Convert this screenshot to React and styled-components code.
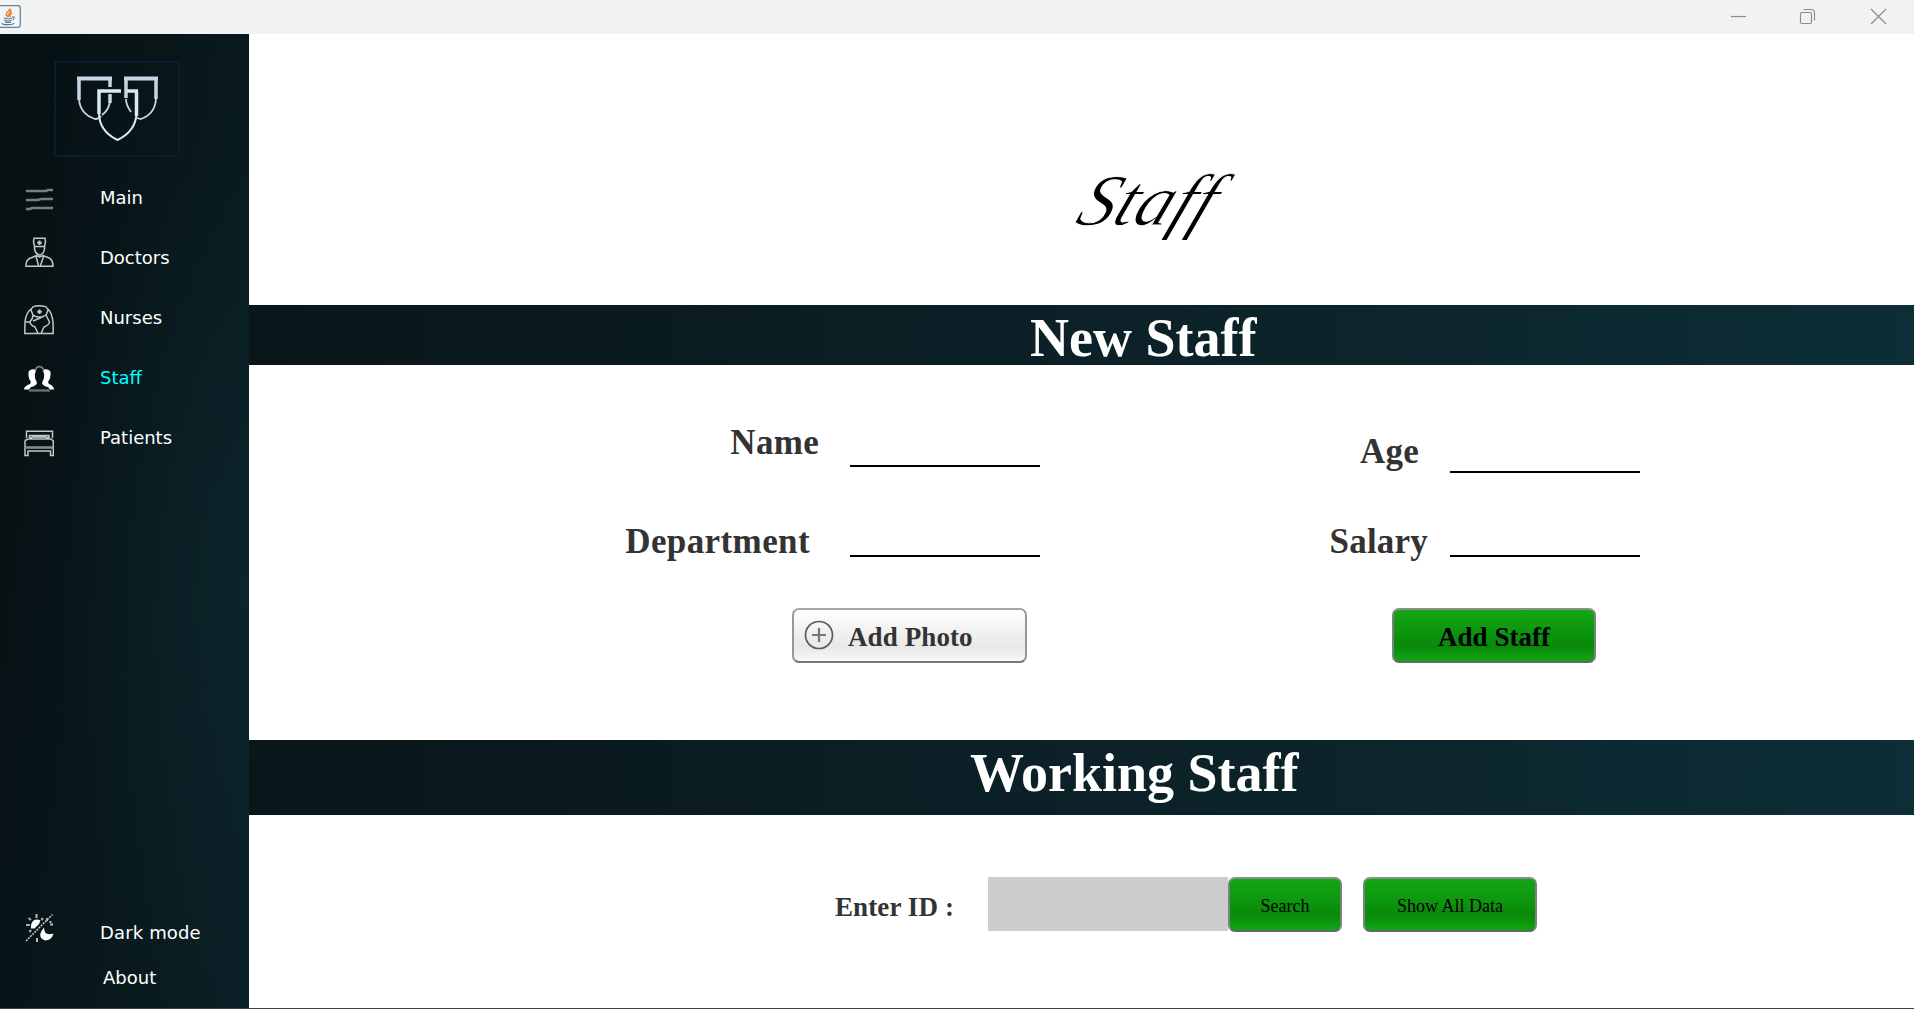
import React from "react";
import styled, { createGlobalStyle, css } from "styled-components";

const Global = createGlobalStyle`
  *, *::before, *::after { box-sizing: border-box; }
  html, body { margin: 0; padding: 0; overflow: hidden; background: #fff; }
  button, input { font: inherit; margin: 0; }
`;

const serif = `"Liberation Serif", "Times New Roman", serif`;

const Window = styled.div`
  width: 1914px;
  height: 1009px;
  display: grid;
  grid-template-rows: 34px 974px 1px;
  background: #fff;
`;

const TitleBar = styled.header`
  display: flex;
  justify-content: space-between;
  background: #f2f2f2;
`;

const AppIcon = styled.svg`
  width: 21px;
  height: 24px;
  margin-top: 5px;
`;

const WindowButtons = styled.div`
  display: flex;
  align-items: center;
  gap: 52px;
  padding: 0 27px 1px 0;
`;

const WindowGlyph = styled.svg`
  width: 17px;
  height: 17px;
  fill: none;
  stroke: #8c8c8c;
  stroke-width: 1.2;
  margin-right: ${(p) => p.$after || 0}px;
`;

const Body = styled.div`
  display: grid;
  grid-template-columns: 249px 1fr;
`;

const BottomEdge = styled.div`
  background: #3d4245;
`;

const Sidebar = styled.nav`
  display: flex;
  flex-direction: column;
  background:
    radial-gradient(ellipse 200px 480px at 255px 560px, rgba(13, 40, 46, 0.7), rgba(13, 40, 46, 0) 100%),
    linear-gradient(97deg, #060f11 0%, #08161a 45%, #0a1f25 100%);
`;

const LogoFrame = styled.div`
  width: 126px;
  height: 96px;
  margin: 27px 0 0 54px;
  border: 2px solid #0b1c31;
`;

const Logo = styled.svg`
  display: block;
  width: 122px;
  height: 92px;
`;

const NavList = styled.div`
  display: flex;
  flex-direction: column;
  margin-top: 11px;
`;

const NavItem = styled.a`
  display: flex;
  align-items: center;
  height: 60px;
  padding-left: 24px;
  gap: 46px;
  font: 18px/22px "DejaVu Sans", Verdana, sans-serif;
  letter-spacing: ${(p) => p.$spacing || 0}px;
  color: ${(p) => (p.$active ? "#00ffff" : "#fff")};
`;

const NavIcon = styled.svg`
  width: 30px;
  height: 30px;
  margin-bottom: ${(p) => p.$lift || 0}px;
  margin-top: ${(p) => p.$drop || 0}px;
  fill: none;
  stroke: #c3c8c9;
  stroke-width: 1.5;
`;

const NavFooter = styled.div`
  display: flex;
  flex-direction: column;
  margin-top: auto;
  height: 105px;
`;

const AboutLink = styled.a`
  padding-left: 103px;
  margin-top: 4px;
  font: 18px/22px "DejaVu Sans", Verdana, sans-serif;
  color: #fff;
`;

const Main = styled.main`
  display: grid;
  grid-template-rows: 271px 60px 375px 75px 193px;
  background: #fff;
`;

const Hero = styled.section`
  padding: 129px 0 0 824px;
`;

const ScriptTitle = styled.h1`
  width: max-content;
  margin: 0;
  font: italic 400 73px/76px ${serif};
  color: #000;
  -webkit-text-stroke: 0.9px #fff;
  transform: skewX(-22deg);
  transform-origin: 0 62px;
`;

const Band = styled.h2`
  margin: 0;
  padding-left: ${(p) => p.$indent}px;
  padding-top: ${(p) => p.$drop}px;
  background: linear-gradient(90deg, #09161a 0%, #0a1a1e 20%, #0b2026 42%, #0d242b 68%, #0c2b33 88%, #0d2e37 100%);
  font: bold 54px/60px ${serif};
  color: #fff;
  white-space: nowrap;
`;

const Form = styled.form`
  display: grid;
  grid-template-columns: 791px 600px;
  align-content: start;
`;

const Column = styled.div`
  display: flex;
  flex-direction: column;
`;

const Field = styled.label`
  display: flex;
  justify-content: flex-end;
  height: ${(p) => p.$height}px;
  font: bold 35px/40px ${serif};
  letter-spacing: ${(p) => p.$spacing || 0}px;
  color: #333;
`;

const FieldName = styled.span`
  padding-top: ${(p) => p.$drop}px;
  margin-right: ${(p) => p.$gap}px;
`;

const Line = styled.input`
  width: 190px;
  border: 0;
  border-bottom: 2px solid #000;
  background: transparent;
  outline: none;
  padding: 0;
`;

const buttonSkin = css`
  display: flex;
  align-items: center;
  border: 2px solid #777b80;
  border-radius: 7px;
  font-family: ${serif};
  white-space: nowrap;
`;

const PhotoButton = styled.button`
  ${buttonSkin}
  width: 235px;
  height: 55px;
  margin: 51px 0 0 543px;
  padding: 3px 0 0 10px;
  gap: 14px;
  border-color: #a3a7aa #94989b #75787b;
  background: linear-gradient(#fff 0%, #f0f0f0 45%, #e8e8e8 72%, #f8f8f8 100%);
  font-size: 27px;
  font-weight: bold;
  letter-spacing: 0.1px;
  color: #333;
`;

const GreenButton = styled.button`
  ${buttonSkin}
  justify-content: center;
  width: ${(p) => p.$width}px;
  height: 55px;
  padding: 4px 0 0;
  border-color: #86928b #7a8380 #5f6a66;
  background: linear-gradient(#13a613 0%, #0d970f 42%, #0a880a 70%, #10a612 100%);
  font-size: ${(p) => p.$font}px;
  font-weight: ${(p) => (p.$bold ? "bold" : "normal")};
  color: #000;
  margin: ${(p) => p.$margin || "0"};
`;

const PlusIcon = styled.svg`
  width: 30px;
  height: 30px;
  fill: none;
  stroke: #5b5b5b;
  stroke-width: 1.7;
  margin-bottom: 4px;
`;

const SearchRow = styled.form`
  display: flex;
  align-items: flex-start;
  padding: 62px 0 0 586px;
`;

const SearchLabel = styled.label`
  width: 153px;
  font: bold 27px/60px ${serif};
  letter-spacing: 0.1px;
  color: #333;
  white-space: pre;
`;

const IdInput = styled.input`
  width: 240px;
  height: 54px;
  border: 0;
  background: #ccc;
`;

function MenuIcon() {
  return (
    <NavIcon viewBox="0 0 30 30" $drop={4}>
      <path d="M2 6H22L24 5H29M2 15H14L17 14H29M2 24H6L8 23H29" stroke="#777f80" strokeWidth="2.6" />
    </NavIcon>
  );
}

function DoctorIcon() {
  return (
    <NavIcon viewBox="0 0 30 30" $lift={13}>
      <path d="M10 1.200H21L21.500 5L20.500 9.500H10.500L9.500 5ZM10.500 9.500V12Q11.500 17 15.500 18Q20 17 20.500 12V9.500M2 29.300Q1.500 22 8 20.500L12.500 18.500L15.500 20L19 18.500L24 20.500Q29 22 29 29.300ZM12 19.500L14.500 28.500M19.500 19.500L16.500 28.500" />
      <path d="M15.500 3.500V8M13.200 5.700H17.800" strokeWidth="2" />
    </NavIcon>
  );
}

function NurseIcon() {
  return (
    <NavIcon viewBox="0 0 30 30" $drop={3}>
      <path d="M8 3Q9 .8 15 .8Q22 .8 23 3L24 5L22 10Q19 12 15 12Q11 12 9 10L7 5ZM7 4Q2 8 1 17L.8 28.500H29.200L29 17Q28 8 24 4M9 10Q9 14 6 16.500Q6 20 11 22L14 28.500H17L20 22Q25 20 25.500 17L22 10M9 16L15 13.500L20 11M2 17H6" />
      <path d="M15.500 4.500V9M13.200 6.700H17.800" strokeWidth="2" />
    </NavIcon>
  );
}

function StaffIcon() {
  return (
    <NavIcon viewBox="0 0 30 30" $drop={4}>
      <g fill="#fff" stroke="none">
        <path d="M4.500 7Q6 3.500 12 4.500L12 6Q10 9 11 13L13 18Q12 21 7 22L5 24.500H0Q0 21 6 19L7 17Q4 13 4.500 7Z" />
        <path d="M26.500 7Q25 3.500 19 4.500L19 6Q21 9 20 13L18 18Q19 21 24 22L26 24.500H30Q30 21 25 19L24 17Q27 13 26.500 7Z" />
      </g>
      <path d="M11.500 6Q11.500 2 15.500 1.500Q19.500 2 19.500 6" stroke="#7f8688" />
      <path d="M5 25.500H26" stroke="#6e7577" strokeWidth="2.200" />
    </NavIcon>
  );
}

function BedIcon() {
  return (
    <NavIcon viewBox="0 0 30 30" $drop={7}>
      <path d="M2.500 11V4.300H28.500V11M5.500 11V8.500H25V11M1 13.500L4 12H27L29.300 14V28.500H26.500V24H4V28.500H1V13.500M6 11L9 10H21L25 11" />
      <path d="M1 20.500H29" strokeWidth="2.600" stroke="#858c8f" />
    </NavIcon>
  );
}

function ModeIcon() {
  return (
    <NavIcon viewBox="0 0 30 30" $lift={12}>
      <path d="M2 29L28.500 2.500" strokeDasharray="2 1" />
      <path d="M7 16.500Q6.500 11 9.500 8.500Q13 6.500 16.500 8.500L15 12L10.500 16.500Z" fill="#fff" stroke="none" />
      <path d="M12.500 2V6M2 13H6M4.500 6L7 8M19 6L17.500 8M5.500 20L7 18" stroke="#a5abad" strokeWidth="2.200" />
      <path d="M20 15.500Q20 24.500 29.500 21.500Q27.500 28.500 21 28.500Q12 25 20 15.500Z" fill="#fff" stroke="none" />
      <path d="M26 12.500H29M13 26V30M23 6V9M26.500 9V11" stroke="#b5babb" strokeWidth="2" />
    </NavIcon>
  );
}

export default function App() {
  return (
    <>
      <Global />
      <Window>
        <TitleBar>
          <AppIcon viewBox="0 0 21 24">
            <path d="M-2 .7H18Q20.300 .7 20.300 3V20Q20.300 22.300 18 22.300H-2Z" fill="#f4f5f6" stroke="#66849a" strokeWidth="1.300" />
            <path d="M8 12Q4 9 9 6Q10 5 9 4Q13 6 9 9Q8 10 8 12M10 12Q9 10 12 8" fill="none" stroke="#e8812d" strokeWidth="1.500" />
            <path d="M4 13Q8 14.500 12 13M4 15Q8 17 12 15M5 17Q8 18 11 17M12 12Q16 11 13 15M2 18Q2 20 8 19.600Q14 19.500 14 18" fill="none" stroke="#557b96" strokeWidth="1.200" />
          </AppIcon>
          <WindowButtons>
            <WindowGlyph viewBox="0 0 17 17" $after={0}>
              <path d="M1 8.500H16" />
            </WindowGlyph>
            <WindowGlyph viewBox="0 0 17 17" $after={2}>
              <rect x="1.500" y="4.500" width="11" height="11" rx="1.500" />
              <path d="M4.500 1.500H12Q15.500 1.500 15.500 5V12.500" />
            </WindowGlyph>
            <WindowGlyph viewBox="0 0 17 17">
              <path d="M1 1L16 16M16 1L1 16" />
            </WindowGlyph>
          </WindowButtons>
        </TitleBar>
        <Body>
          <Sidebar>
            <LogoFrame>
              <Logo viewBox="56 63 122 92" fill="none">
                <g stroke="#c9d5e4">
                  <path d="M79 99Q80 114 95 119Q99 119 101 116M110 102Q108 111 102 115" strokeWidth="1.800" />
                  <path d="M131 112Q126 105 126 99M156 99Q155 114 141 119L137 118" strokeWidth="1.800" />
                  <path d="M77 78.500H112M124 78.500H158" strokeWidth="4" />
                  <path d="M79 80V100M110 79V87M110 94V103M126 79V98M156 79V99" strokeWidth="3.500" />
                </g>
                <g stroke="#dde8f8">
                  <path d="M99 114V91H121M127 91H138M136.500 91V116" strokeWidth="3.500" />
                  <path d="M99 113Q99 131 117.500 140Q136 131 136.500 113" strokeWidth="2" />
                </g>
              </Logo>
            </LogoFrame>
            <NavList>
              <NavItem><MenuIcon />Main</NavItem>
              <NavItem><DoctorIcon />Doctors</NavItem>
              <NavItem><NurseIcon />Nurses</NavItem>
              <NavItem $active><StaffIcon />Staff</NavItem>
              <NavItem><BedIcon />Patients</NavItem>
            </NavList>
            <NavFooter>
              <NavItem $spacing={0.15}><ModeIcon />Dark mode</NavItem>
              <AboutLink>About</AboutLink>
            </NavFooter>
          </Sidebar>
          <Main>
            <Hero>
              <ScriptTitle>Staff</ScriptTitle>
            </Hero>
            <Band $indent={781} $drop={3}>New Staff</Band>
            <Form>
              <Column>
                <Field $height={102} $spacing={0.3}>
                  <FieldName $drop={58} $gap={31}>Name</FieldName>
                  <Line />
                </Field>
                <Field $height={90} $spacing={0.4}>
                  <FieldName $drop={55} $gap={40}>Department</FieldName>
                  <Line />
                </Field>
                <PhotoButton type="button">
                  <PlusIcon viewBox="0 0 30 30">
                    <circle cx="15" cy="15" r="13.500" />
                    <path d="M8 15H22M15 8V22" stroke="#777" strokeWidth="2.200" />
                  </PlusIcon>
                  Add Photo
                </PhotoButton>
              </Column>
              <Column>
                <Field $height={108} $spacing={0.2}>
                  <FieldName $drop={67} $gap={31}>Age</FieldName>
                  <Line />
                </Field>
                <Field $height={84} $spacing={0.2}>
                  <FieldName $drop={49} $gap={22}>Salary</FieldName>
                  <Line />
                </Field>
                <GreenButton type="button" $width={204} $font={27} $bold $margin="51px 0 0 352px">Add Staff</GreenButton>
              </Column>
            </Form>
            <Band $indent={721} $drop={3}>Working Staff</Band>
            <SearchRow>
              <SearchLabel>Enter ID :</SearchLabel>
              <IdInput />
              <GreenButton type="button" $width={114} $font={18}>Search</GreenButton>
              <GreenButton type="button" $width={174} $font={18} $margin="0 0 0 21px">Show All Data</GreenButton>
            </SearchRow>
          </Main>
        </Body>
        <BottomEdge />
      </Window>
    </>
  );
}
